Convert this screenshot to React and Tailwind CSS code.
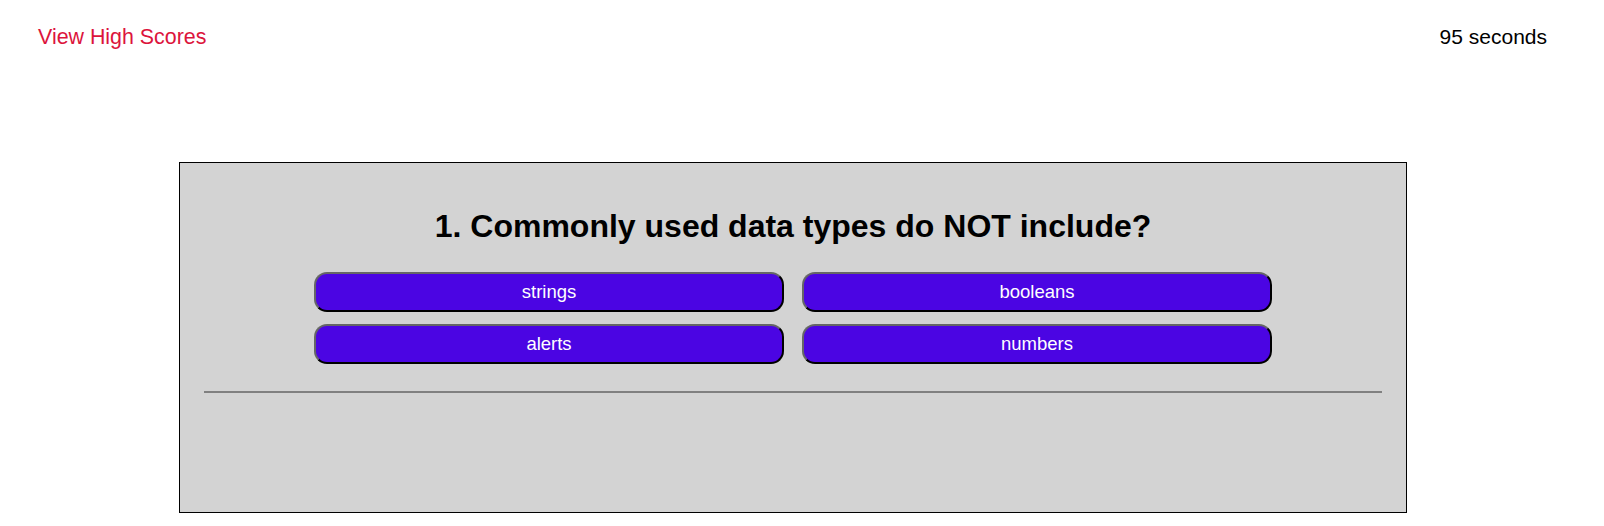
import React from 'react'

const choices = ['strings', 'booleans', 'alerts', 'numbers']

export default function App() {
  return (
    <div className="min-h-screen bg-white text-black font-['Liberation_Sans',Arial,sans-serif]">
      <header className="flex items-start justify-between pl-[38px] pr-[57px] pt-[25px]">
        <a href="#" className="text-[21.4px] leading-[24px] text-[#dc143c]">View High Scores</a>
        <span className="text-[21px] leading-[24px]">95 seconds</span>
      </header>

      <main className="ml-[179px] mt-[113px] h-[351px] w-[1228px] border border-black bg-[#d3d3d3]">
        <h1 className="pt-[45px] text-center text-[32px] font-bold leading-[37px]">
          1. Commonly used data types do NOT include?
        </h1>
        <div className="mx-auto mt-[27px] grid w-[958px] grid-cols-2 gap-x-[18px] gap-y-[12px]">
          {choices.map((c) => (
            <button
              key={c}
              className="h-[40px] rounded-[13px] border-2 border-t-[#666] border-l-[#666] border-b-black border-r-black bg-[#4b05e3] text-[18.5px] text-white"
            >
              {c}
            </button>
          ))}
        </div>
        <div className="mx-[24px] mt-[27px] border-t-2 border-[#808080]" />
      </main>
    </div>
  )
}
